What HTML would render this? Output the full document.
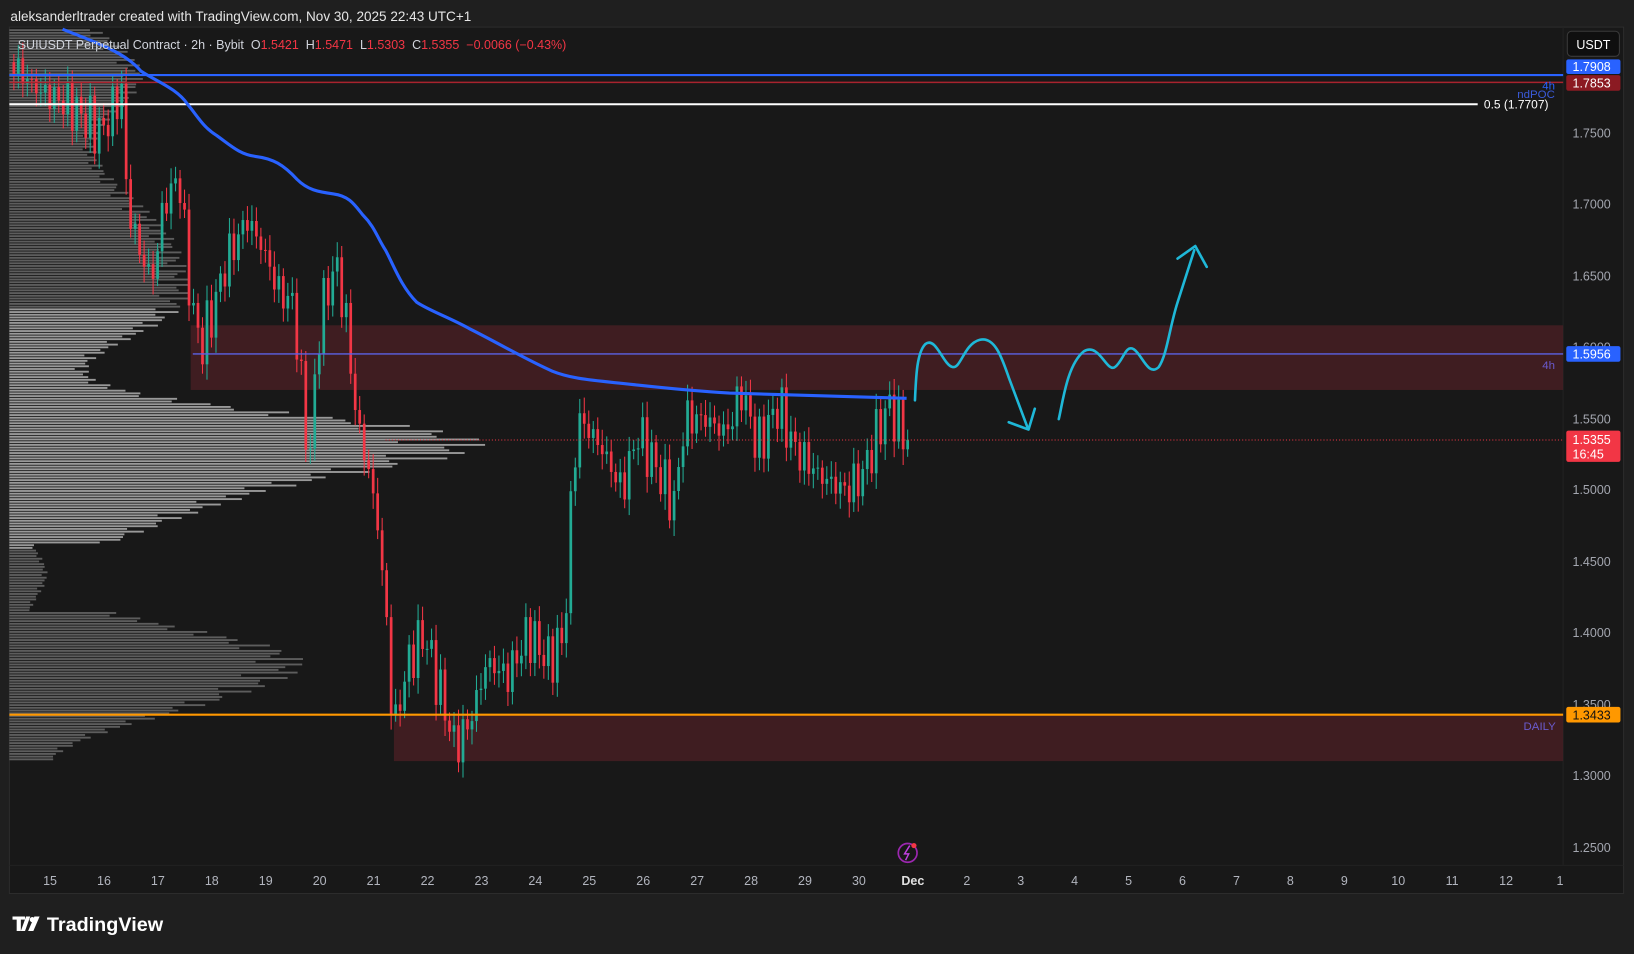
<!DOCTYPE html>
<html><head><meta charset="utf-8"><style>
html,body{margin:0;padding:0;background:#1f1f1f;overflow:hidden}
svg{display:block}
text{font-family:"Liberation Sans",sans-serif}
</style></head><body>
<svg id="s" width="1634" height="954" viewBox="0 0 1568 915" preserveAspectRatio="none" xmlns="http://www.w3.org/2000/svg">
<rect width="1568" height="915" fill="#1f1f1f"/>
<text x="10" y="20" font-size="13" fill="#e6e6e6">aleksanderltrader created with TradingView.com, Nov 30, 2025 22:43 UTC+1</text>
<rect x="9" y="26" width="1549" height="831" fill="#181818" stroke="#2c2c2c"/>
<line x1="1500" y1="26" x2="1500" y2="830" stroke="#222"/>
<line x1="9" y1="830" x2="1558" y2="830" stroke="#222"/>
<g id="vp"></g>
<rect x="183" y="312" width="1317" height="62" fill="#4a1f24" fill-opacity="0.8"/>
<rect x="378" y="686" width="1122" height="44" fill="#4a1f24" fill-opacity="0.8"/>
<g id="cd"></g>
<line x1="9" y1="72" x2="1500" y2="72" stroke="#2962ff" stroke-width="2"/>
<line x1="9" y1="79" x2="1500" y2="79" stroke="#a8232e" stroke-width="1.5"/>
<line x1="9" y1="100" x2="1418" y2="100" stroke="#ffffff" stroke-width="2"/>
<line x1="185" y1="339.5" x2="1500" y2="339.5" stroke="#5b62e6" stroke-width="1.3"/>
<line x1="9" y1="685.5" x2="1500" y2="685.5" stroke="#ff9800" stroke-width="2"/>
<line x1="370" y1="422" x2="1500" y2="422" stroke="#f23645" stroke-width="1" stroke-dasharray="1,2"/>
<path d="M60,28 C90,40 120,50 135,68 C150,78 170,85 180,100 C190,112 195,122 208,130 C222,140 230,148 245,150 C262,152 272,158 285,172 C295,182 305,184 320,186 C335,188 340,196 348,206 C360,218 362,228 370,240 C378,255 385,275 400,290 C412,298 430,304 450,315 C480,330 505,345 530,356 C545,362 560,364 590,367 C620,370 650,374 700,377 L870,382" fill="none" stroke="#2962ff" stroke-width="3" stroke-linejoin="round"/>
<g fill="none" stroke="#1fb8d8" stroke-width="2.5" stroke-linecap="round" stroke-linejoin="round">
<path d="M878,384 C879,360 880,338 888,330 C898,322 905,350 914,352 C922,354 925,330 940,326 C955,322 962,345 968,362 L986,410"/>
<path d="M968,405 L987,412 L993,392"/>
<path d="M1016,402 C1020,385 1024,350 1040,337 C1055,328 1062,358 1070,352 C1078,346 1080,330 1088,335 C1096,340 1102,362 1112,352 C1120,340 1122,315 1130,290 L1146,240"/>
<path d="M1130,248 L1147,236 L1158,256"/>
</g>
<text x="17" y="47" font-size="12" fill="#d1d4dc" xml:space="preserve">SUIUSDT Perpetual Contract · 2h · Bybit  O<tspan fill="#f23645">1.5421</tspan>  H<tspan fill="#f23645">1.5471</tspan>  L<tspan fill="#f23645">1.5303</tspan>  C<tspan fill="#f23645">1.5355</tspan>  <tspan fill="#f23645">−0.0066 (−0.43%)</tspan></text>
<text x="1424" y="104" font-size="11.5" fill="#fff">0.5 (1.7707)</text>
<text x="1480" y="86" font-size="11" fill="#2962ff">4h</text>
<text x="1456" y="94" font-size="11" fill="#3b5bdb">ndPOC</text>
<text x="1480" y="354" font-size="11" fill="#6a5acd">4h</text>
<text x="1462" y="700" font-size="11" fill="#6a5acd">DAILY</text>
<g font-size="12" fill="#a3a6af">
<text x="1509" y="132">1.7500</text><text x="1509" y="200">1.7000</text><text x="1509" y="269">1.6500</text><text x="1509" y="337">1.6000</text><text x="1509" y="406">1.5500</text><text x="1509" y="474">1.5000</text><text x="1509" y="543">1.4500</text><text x="1509" y="611">1.4000</text><text x="1509" y="680">1.3500</text><text x="1509" y="748">1.3000</text><text x="1509" y="817">1.2500</text>
</g>
<rect x="1504" y="30" width="50" height="24" rx="4" fill="#0f0f0f" stroke="#3a3a3a"/>
<text x="1529" y="47" font-size="12" fill="#fff" text-anchor="middle">USDT</text>
<rect x="1503" y="57" width="52" height="14" rx="2" fill="#2962ff"/><text x="1509" y="68" font-size="12" fill="#fff">1.7908</text>
<rect x="1503" y="72" width="52" height="15" rx="2" fill="#8b1a22"/><text x="1509" y="84" font-size="12" fill="#fff">1.7853</text>
<rect x="1503" y="332" width="52" height="15" rx="2" fill="#2962ff"/><text x="1509" y="344" font-size="12" fill="#fff">1.5956</text>
<rect x="1503" y="413" width="52" height="30" rx="2" fill="#f23645"/><text x="1509" y="426" font-size="12" fill="#fff">1.5355</text><text x="1509" y="440" font-size="12" fill="#fff">16:45</text>
<rect x="1503" y="678" width="52" height="15" rx="2" fill="#ff9800"/><text x="1509" y="690" font-size="12" fill="#111">1.3433</text>
<circle cx="871" cy="818" r="9" fill="none" stroke="#9c27b0" stroke-width="1.6"/>
<path d="M873,811 L868,819 L872,819 L869,825" fill="none" stroke="#c040e0" stroke-width="1.4"/>
<circle cx="877" cy="811" r="2.5" fill="#f23645"/>
<g id="dates" font-size="12" fill="#b2b5be" text-anchor="middle"></g>
<g fill="#fff"><path d="M12,879 h12 v3 h-4 v11 h-4 v-11 h-4z M25,879 h4 l-5,14 h-4z"/><circle cx="31" cy="882" r="2.5"/><path d="M33,879 h5 l-6,14 h-5z"/></g>
<text x="45" y="893" font-size="19" font-weight="bold" fill="#fff">TradingView</text>
</svg>
<script>
var NS="http://www.w3.org/2000/svg";
function el(p,t,a){var e=document.createElementNS(NS,t);for(var k in a)e.setAttribute(k,a[k]);p.appendChild(e);return e;}
function Y(p){return 128+(1.75-p)/0.05*68.5;}
var lbl=["15","16","17","18","19","20","21","22","23","24","25","26","27","28","29","30","Dec","2","3","4","5","6","7","8","9","10","11","12","1"];
var dg=document.getElementById("dates");
lbl.forEach(function(l,i){var t=el(dg,"text",{x:48+i*51.75,y:849});t.textContent=l;if(l=="Dec"){t.setAttribute("fill","#e0e0e0");t.setAttribute("font-weight","bold");}});
var vp=document.getElementById("vp");
function g(y,c,w,h){return h*Math.exp(-((y-c)*(y-c))/(2*w*w));}
for(var y=28;y<730;y+=2.6){
 var L=30+g(y,70,40,90)+g(y,240,60,120)+g(y,300,30,50)+g(y,420,25,310)+g(y,465,40,170)+g(y,630,28,220)+g(y,675,25,90);
 if(y>520&&y<585)L=15+g(y,550,20,20);
 L*=0.85+0.2*Math.abs(Math.sin(y*1.7));
 var va=(y>295&&y<525);
 el(vp,"rect",{x:9,y:y,width:L,height:1.8,fill:va?"#c4c4c4":"#7a7a7a","fill-opacity":va?0.75:0.7});
}
var K=[[12,1.80],[40,1.78],[70,1.77],[100,1.75],[120,1.78],[125,1.70],[140,1.66],[150,1.65],[160,1.70],[175,1.72],[185,1.64],[195,1.60],[205,1.62],[220,1.66],[240,1.69],[255,1.67],[270,1.64],[285,1.63],[295,1.55],[300,1.52],[310,1.62],[325,1.66],[335,1.62],[345,1.55],[355,1.52],[365,1.48],[375,1.40],[380,1.33],[395,1.38],[410,1.40],[425,1.36],[440,1.32],[455,1.34],[470,1.38],[490,1.37],[510,1.40],[530,1.38],[545,1.40],[553,1.52],[560,1.55],[580,1.53],[600,1.50],[615,1.54],[630,1.52],[650,1.49],[660,1.55],[680,1.55],[700,1.54],[715,1.57],[730,1.53],[750,1.56],[765,1.53],[790,1.51],[815,1.50],[830,1.51],[845,1.54],[855,1.56],[873,1.5355]];
function P(x){for(var i=1;i<K.length;i++){if(x<=K[i][0]){var a=K[i-1],b=K[i];return a[1]+(b[1]-a[1])*(x-a[0])/(b[0]-a[0]);}}return K[K.length-1][1];}
var cd=document.getElementById("cd");var prev=P(12);
for(var x=12;x<=873;x+=4.31){
 var c=P(x+4.31)+0.012*Math.sin(x*0.9)+0.008*Math.sin(x*2.3);
 if(x+4.31>873)c=1.5355;
 var o=prev;var hi=Math.max(o,c)+0.005+0.006*Math.abs(Math.sin(x*1.3));var lo=Math.min(o,c)-0.005-0.006*Math.abs(Math.cos(x*1.1));
 var col=c>=o?"#22ab94":"#f23645";
 el(cd,"line",{x1:x+1.3,x2:x+1.3,y1:Y(hi),y2:Y(lo),stroke:col,"stroke-width":1});
 var t=Y(Math.max(o,c)),b=Y(Math.min(o,c));
 el(cd,"rect",{x:x,y:t,width:2.6,height:Math.max(1,b-t),fill:col});
 prev=c;
}
</script>
</body></html>
